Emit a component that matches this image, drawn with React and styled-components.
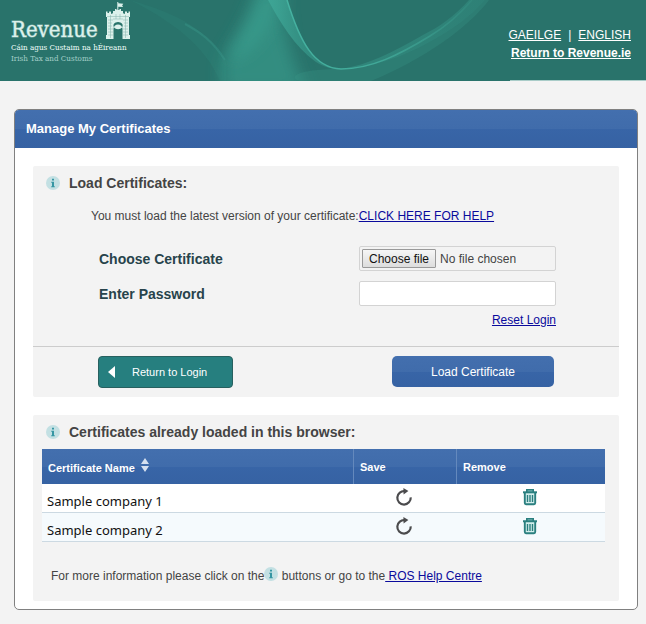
import styled, {createGlobalStyle} from 'styled-components';
import {useRef, useState} from 'react';

const color = {
    page: '#f3f3f3',
    text: '#444444',
    label: '#27434b',
    link: '#0a0a9c',
    teal: '#29736b',
    button: '#267f7f',
    icon: '#2a7f7f',
    white: '#ffffff',
    border: '#808080',
}

const blueGradient = 'linear-gradient(#436fae 0, #406cab 50%, #3865a7 50%, #3662a3 100%)'

const GlobalStyle = createGlobalStyle`
    * {
        box-sizing: border-box;
    }
    body {
        margin: 0;
        background-color: ${color.page};
        color: ${color.text};
        font-family: "Liberation Sans", Arial, sans-serif;
        font-size: 12px;
        line-height: 16px;
    }
    button, input {
        font-family: inherit;
        font-size: 12px;
    }
`

const Header = styled.header`
    position: relative;
    display: flex;
    justify-content: space-between;
    height: 81px;
    padding: 0 15px 0 11px;
    background-color: ${color.teal};
    overflow: hidden;
`

const HeaderWaves = styled.svg`
    position: absolute;
    top: 0;
    left: 0;
    width: 100%;
    height: 100%;
`

const Logo = styled.a`
    position: relative;
    display: block;
    color: #dcf1ec;
    font-family: "DejaVu Serif Condensed", "DejaVu Serif", serif;
    text-decoration: none;
    white-space: nowrap;
`

const LogoTop = styled.div`
    display: flex;
    align-items: flex-end;
    gap: 8px;
    height: 42px;
`

const LogoName = styled.div`
    font-size: 22px;
    line-height: 24px;
    -webkit-text-stroke: 1px #dcf1ec80;
`

const LogoLine = styled.div`
    font-size: 8px;
    line-height: 11px;
    color: ${props => props.$faded ? '#a3cfc8' : '#f2fffc'};
`

const CastleSvg = styled.svg`
    height: 37px;
    width: 24px;
    margin-bottom: 3px;
`

const HeaderLinks = styled.nav`
    position: relative;
    padding-top: 26px;
    line-height: 18px;
    text-align: right;
    color: ${color.white};
`

const HeaderLink = styled.a`
    color: ${color.white};
    font-weight: ${props => props.$bold ? 'bold' : 'normal'};
`

const Divider = styled.span`
    padding: 0 7px;
`

const Panel = styled.main`
    margin: 28px 8px 14px 14px;
    background-color: ${color.white};
    border: 1px solid ${color.border};
    border-radius: 5px;
    overflow: hidden;
`

const PanelTitle = styled.h1`
    margin: 0;
    padding: 0 11px;
    background: ${blueGradient};
    color: ${color.white};
    font-size: 13px;
    line-height: 38px;
`

const PanelBody = styled.div`
    display: flex;
    flex-direction: column;
    gap: 18px;
    padding: 18px 18px 8px;
`

const Section = styled.section`
    background-color: ${color.page};
    border-radius: 2px;
`

const SectionTitle = styled.h2`
    display: flex;
    align-items: center;
    gap: 9px;
    margin: 0;
    padding: 0 13px;
    font-size: 14px;
    line-height: 34px;
`

const InfoSvg = styled.svg`
    width: 14px;
    height: 14px;
    flex-shrink: 0;
`

const Notice = styled.p`
    margin: 0;
    padding: 8px 58px 22px;
`

const Link = styled.a`
    color: ${color.link};
`

const Form = styled.div`
    display: grid;
    grid-template-columns: 1fr 197px;
    row-gap: 10px;
    align-items: center;
    padding: 0 63px 18px 66px;
`

const FieldLabel = styled.label`
    color: ${color.label};
    font-size: 14px;
    font-weight: bold;
`

const FileBox = styled.div`
    display: flex;
    align-items: center;
    gap: 4px;
    height: 25px;
    padding: 0 2px;
    border: 1px solid #d3d3d3;
    border-radius: 2px;
`

const HiddenFile = styled.input`
    display: none;
`

const FileButton = styled.button`
    height: 19px;
    padding: 0 6px;
    border: 1px solid #999999;
    border-radius: 1px;
    background: linear-gradient(#f6f6f6, #dddddd);
    color: #111111;
    line-height: 16px;
    white-space: nowrap;
`

const FileName = styled.span`
    overflow: hidden;
    text-overflow: ellipsis;
    white-space: nowrap;
`

const TextInput = styled.input`
    width: 100%;
    height: 25px;
    padding: 0 6px;
    border: 1px solid #d3d3d3;
    border-radius: 2px;
    background-color: ${color.white};
`

const ResetLink = styled(Link)`
    grid-column: 2;
    justify-self: end;
    line-height: 16px;
    margin-top: -4px;
`

const Actions = styled.div`
    display: flex;
    justify-content: space-between;
    align-items: flex-start;
    padding: 9px 65px;
    border-top: 1px solid #cccccc;
`

const BackButton = styled.button`
    display: flex;
    align-items: center;
    gap: 17px;
    width: 135px;
    height: 32px;
    padding: 0 9px;
    border: 1px solid #27605f;
    border-radius: 4px;
    background-color: ${color.button};
    color: ${color.white};
    font-size: 11px;
`

const LoadButton = styled.button`
    width: 162px;
    height: 31px;
    border: none;
    border-radius: 5px;
    background: ${blueGradient};
    color: ${color.white};
`

const TableWrap = styled.div`
    padding: 0 14px 0 9px;
`

const Table = styled.table`
    width: 100%;
    border-collapse: separate;
    border-spacing: 0;
    table-layout: fixed;
`

const HeadRow = styled.tr`
    background: ${blueGradient};
    color: ${color.white};
`

const HeadCell = styled.th`
    width: ${props => props.$width};
    height: 35px;
    padding: 0 6px;
    border-left: ${props => props.$divided ? '1px solid #6489bd' : 'none'};
    font-size: 11px;
    text-align: left;
`

const SortSvg = styled.svg`
    width: 8px;
    height: 14px;
    margin-left: 6px;
`

const Row = styled.tr`
    background-color: ${color.white};
    &:nth-child(even) {
        background-color: #f5fafd;
    }
`

const Cell = styled.td`
    height: 29px;
    padding: ${props => props.$center ? '0 2px 2px 0' : '6px 5px 0'};
    border-bottom: 1px solid #ccd9e2;
    color: #111111;
    font-family: "Noto Sans", sans-serif;
    font-size: 13px;
    text-align: ${props => props.$center ? 'center' : 'left'};
`

const IconButton = styled.button`
    display: inline-flex;
    padding: 0;
    border: none;
    background: none;
    vertical-align: middle;
`

const MoreInfo = styled.p`
    margin: 0;
    padding: 25px 18px 16px;
    line-height: 18px;
    & ${InfoSvg} {
        vertical-align: -1px;
    }
`

function InfoIcon() {
    return (
        <InfoSvg viewBox="0 0 14 14">
            <circle cx="7" cy="7" r="7" fill="#c3e0e3" />
            <path d="M6 2.800h2v1.800H6zM5.200 5.800H8v4.400h.8v1H5.200v-1H6V6.800h-.8z" fill="#3696a3" />
        </InfoSvg>
    )
}

function Castle() {
    return (
        <CastleSvg viewBox="0 0 24 37">
            <g fill="#dcf1ec">
                <path d="M11.300 0h1v1.200l5 .6-1.200 1.700 1 1.600-4.800-.3V8h-1z" />
                <path d="M7 9h2V7h1.500v1h3V7H15v2h2v3H7z" />
                <path fillRule="evenodd" d="M0 9.500h1.500V11H3V9.500h2V12l2.500-1h9l2.500 1V9.500h2V11h1.500V9.500H24V15h-1v18h1v4h-7.500V27a4.500 4.500 0 0 0-9 0v10H0v-4h1V15H0zM12 20a4.600 3.600 0 1 0 .1 0z" />
            </g>
            <g stroke={color.teal} strokeWidth=".5" opacity=".5">
                <path d="M1 14.500h22M2 18h5M2 21h4M2 24h4M2 27h5M2 30h5M2 33h5M17 18h5M18 21h4M18 24h4M17 27h5M17 30h5M17 33h5M7 17h10M4.500 13v23M19.500 13v23M10 12v5M14 12v5" />
            </g>
        </CastleSvg>
    )
}

function Waves() {
    return (
        <HeaderWaves viewBox="0 0 646 81" preserveAspectRatio="none">
            <defs>
                <linearGradient id="ribbon" gradientUnits="userSpaceOnUse" x1="265" y1="0" x2="490" y2="0">
                    <stop offset="0" stopColor="#3fa898" stopOpacity=".85" />
                    <stop offset=".25" stopColor="#3aa090" stopOpacity=".45" />
                    <stop offset="1" stopColor="#3aa090" stopOpacity=".3" />
                </linearGradient>
                <linearGradient id="edge" gradientUnits="userSpaceOnUse" x1="287" y1="0" x2="486" y2="0">
                    <stop offset="0" stopColor="#45b2a1" />
                    <stop offset=".45" stopColor="#41a898" />
                    <stop offset="1" stopColor="#3a9c8d" stopOpacity=".1" />
                </linearGradient>
                <filter id="soft" x="-30%" y="-30%" width="160%" height="160%">
                    <feGaussianBlur stdDeviation="8" />
                </filter>
            </defs>
            <path d="M258-12h26c-2 25 0 60 24 104h-84c-2-14-4-28 4-42 10-16 22-36 30-62z" fill="#37998a" opacity=".7" filter="url(#soft)" />
            <path d="M262-10h14c0 24-12 60-46 70-4-8 22-30 32-70z" fill="#3ba291" opacity=".6" filter="url(#soft)" />
            <path d="M130 0c25 8 60 17 85 46l11 16v19h-6C205 45 170 20 130 0z" fill="#3aa493" opacity=".1" />
            <path d="M287 0c13 42 27 68 54 69 35 0 78-18 112-41 15-10 24-19 32-28h-16c-14 16-30 27-46 35-30 17-55 30-82 34-27-1-41-27-54-69zM268 0c12 22 26 46 48 62 8 5 16 7 25 7-27-1-41-27-54-69z" fill="url(#ribbon)" />
            <path d="M341 69c35 0 78-18 112-41 15-10 24-19 32-28h4c-20 27-66 60-118 81h-70c-12-2-10-12 40-12z" fill="#3a9c8d" opacity=".25" />
            <path d="M287 0c13 42 27 68 54 69 30 0 58-14 89-33 15-9 30-22 42-36" fill="none" stroke="url(#edge)" strokeWidth="1.500" />
            <path d="M185 24c15 8 28 17 40 36" fill="none" stroke="#3c9f90" strokeWidth="2" opacity=".35" />
            <path d="M510 80.500h136" stroke="#a9ccc8" />
        </HeaderWaves>
    )
}

function SaveIcon() {
    return (
        <svg width="18" height="18" viewBox="0 0 18 18">
            <path d="M10 3.200A6.700 6.700 0 1 0 15.700 9.300" fill="none" stroke="#4b4b4d" strokeWidth="2.200" />
            <path d="M8.400 0l5 3-4.800 3.400z" fill="#4b4b4d" />
        </svg>
    )
}

function TrashIcon() {
    return (
        <svg width="16" height="18" viewBox="0 0 16 18">
            <g fill="none" stroke={color.icon}>
                <path d="M2.800 4.500v10.500q0 1.200 1.200 1.200h8q1.200 0 1.200-1.200V4.500" fill="#d3eeec" strokeWidth="1.900" />
                <path d="M4.800 4V1.800h6.400V4" fill="#8cc4c2" strokeWidth="1.600" />
                <path d="M1 4.300h14" strokeWidth="2" />
                <path d="M5.500 7v7M8 7v7M10.500 7v7" strokeWidth="1.400" />
            </g>
        </svg>
    )
}

function CertificateRow({name}) {
    return (
        <Row>
            <Cell>{name}</Cell>
            <Cell $center><IconButton type="button" aria-label={`Save ${name}`}><SaveIcon /></IconButton></Cell>
            <Cell $center><IconButton type="button" aria-label={`Remove ${name}`}><TrashIcon /></IconButton></Cell>
        </Row>
    )
}

const certificates = ['Sample company 1', 'Sample company 2']

function App() {
    const fileInput = useRef(null)
    const [fileName, setFileName] = useState('No file chosen')

    const handleFileChange = (e) => {
        const file = e.target.files[0]
        setFileName(file ? file.name : 'No file chosen')
    }

    return (
        <>
            <GlobalStyle />
            <Header>
                <Waves />
                <Logo href="#">
                    <LogoTop>
                        <LogoName>Revenue</LogoName>
                        <Castle />
                    </LogoTop>
                    <LogoLine>Cáin agus Custaim na hÉireann</LogoLine>
                    <LogoLine $faded>Irish Tax and Customs</LogoLine>
                </Logo>
                <HeaderLinks>
                    <HeaderLink href="#">GAEILGE</HeaderLink>
                    <Divider>|</Divider>
                    <HeaderLink href="#">ENGLISH</HeaderLink>
                    <br />
                    <HeaderLink href="#" $bold>Return to Revenue.ie</HeaderLink>
                </HeaderLinks>
            </Header>

            <Panel>
                <PanelTitle>Manage My Certificates</PanelTitle>
                <PanelBody>
                    <Section>
                        <SectionTitle><InfoIcon />Load Certificates:</SectionTitle>
                        <Notice>
                            You must load the latest version of your certificate:<Link href="#">CLICK HERE FOR HELP</Link>
                        </Notice>
                        <Form>
                            <FieldLabel htmlFor="certificate">Choose Certificate</FieldLabel>
                            <FileBox>
                                <HiddenFile id="certificate" type="file" ref={fileInput} onChange={handleFileChange} />
                                <FileButton type="button" onClick={() => fileInput.current.click()}>Choose file</FileButton>
                                <FileName>{fileName}</FileName>
                            </FileBox>
                            <FieldLabel htmlFor="password">Enter Password</FieldLabel>
                            <TextInput id="password" type="password" />
                            <ResetLink href="#">Reset Login</ResetLink>
                        </Form>
                        <Actions>
                            <BackButton type="button">
                                <svg width="7" height="12" viewBox="0 0 7 12"><path d="M7 0v12L0 6z" fill="#ffffff" /></svg>
                                Return to Login
                            </BackButton>
                            <LoadButton type="button">Load Certificate</LoadButton>
                        </Actions>
                    </Section>

                    <Section>
                        <SectionTitle><InfoIcon />Certificates already loaded in this browser:</SectionTitle>
                        <TableWrap>
                            <Table>
                                <thead>
                                    <HeadRow>
                                        <HeadCell>
                                            Certificate Name
                                            <SortSvg viewBox="0 0 8 14"><path d="M4 0l4 6H0zM0 8h8l-4 6z" fill="#d5e0ef" /></SortSvg>
                                        </HeadCell>
                                        <HeadCell $width="103px" $divided>Save</HeadCell>
                                        <HeadCell $width="149px" $divided>Remove</HeadCell>
                                    </HeadRow>
                                </thead>
                                <tbody>
                                    {certificates.map(name => <CertificateRow key={name} name={name} />)}
                                </tbody>
                            </Table>
                        </TableWrap>
                        <MoreInfo>
                            For more information please click on the<InfoIcon /> buttons or go to the<Link href="#"> ROS Help Centre</Link>
                        </MoreInfo>
                    </Section>
                </PanelBody>
            </Panel>
        </>
    )
}

export default App;
